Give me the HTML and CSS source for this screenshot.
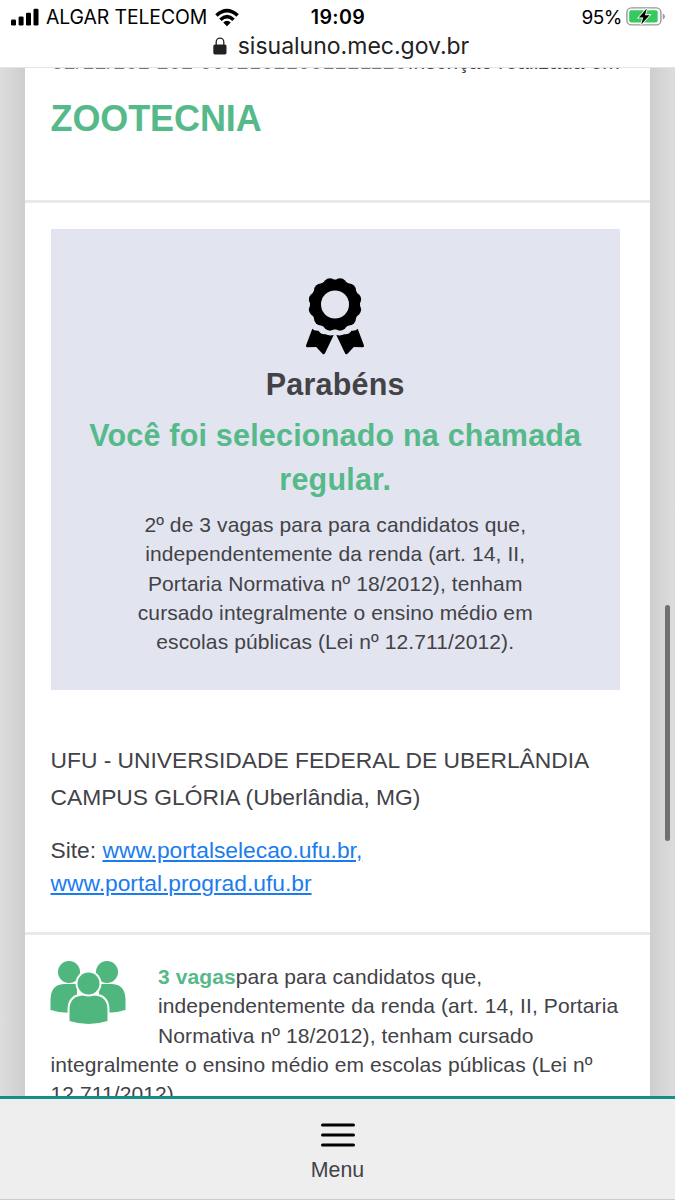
FILE: index.html
```html
<!DOCTYPE html>
<html lang="pt-BR">
<head>
<meta charset="utf-8">
<title>SiSU</title>
<link rel="stylesheet" href="styles.css">
</head>
<body>
<div class="screen">
  <header class="chrome">
    <div class="status">
      <div class="carrier">
        <svg width="30" height="18" viewBox="0 0 30 18"><rect x="1" y="11.5" width="5" height="6" rx="1.3"/><rect x="8.6" y="8.5" width="5" height="9" rx="1.3"/><rect x="16" y="4.8" width="5" height="12.7" rx="1.3"/><rect x="23.5" y="0.8" width="5" height="16.7" rx="1.3"/></svg>
        <span class="carrier-name">ALGAR TELECOM</span>
        <svg class="wifi" width="26" height="19" viewBox="0 0 26 19"><path d="M1.2 6.2Q13-4.800 24.8 6.2L22.3 8.800Q13 .4 3.7 8.800ZM5.2 10.4Q13 3 20.8 10.4L18.3 13Q13 8.2 7.7 13ZM9.2 14.4Q13 11 16.8 14.4L13 18.2Z"/></svg>
      </div>
      <span class="clock">19:09</span>
      <div class="power">
        <span class="percent">95%</span>
        <svg width="40" height="20" viewBox="0 0 40 20"><rect x=".9" y=".9" width="34" height="17" rx="4.5" fill="#fff" stroke="#999" stroke-width="1.4"/><rect x="3.2" y="3.2" width="28.5" height="12.4" rx="2" fill="#35ca5b"/><path d="M36.8 6.5Q39 7.5 39 9.5T36.8 12.5Z" fill="#999"/><path d="M20.8 1.500L12.8 10.600H17.200L15.200 17.500L23.600 8.200H19Z" stroke="#fff" stroke-width="1.8" paint-order="stroke"/></svg>
      </div>
    </div>
    <div class="address">
      <svg width="14" height="18" viewBox="0 0 14 18"><path d="M3.2 8V5a3.8 3.8 0 0 1 7.6 0v3" fill="none" stroke="#222" stroke-width="1.3"/><rect x=".3" y="7.4" width="13.2" height="10" rx="1.6" fill="#222"/></svg>
      <span class="url">sisualuno.mec.gov.br</span>
    </div>
  </header>
  <main class="viewport">
    <article class="card">
      <div class="clipped"><span class="code">02/12/202 202 00021021001221120</span><span class="enrol">Inscrição realizada em</span></div>
      <section class="course"><h1 class="course-name">ZOOTECNIA</h1></section>
      <section class="result">
        <div class="congrats">
          <svg class="award" width="60" height="78" viewBox="0 0 60 78">
            <g transform="translate(30 26.500)">
              <circle r="25.100"/>
              <circle cx="5.120" cy="19.130" r="7"/><circle cx="14" cy="14" r="7"/><circle cx="19.130" cy="5.120" r="7"/>
              <circle cx="19.130" cy="-5.120" r="7"/><circle cx="14" cy="-14" r="7"/><circle cx="5.120" cy="-19.130" r="7"/>
              <circle cx="-5.120" cy="-19.130" r="7"/><circle cx="-14" cy="-14" r="7"/><circle cx="-19.130" cy="-5.120" r="7"/>
              <circle cx="-19.130" cy="5.120" r="7"/><circle cx="-14" cy="14" r="7"/><circle cx="-5.120" cy="19.130" r="7"/>
              <circle r="14" fill="#e2e5ef"/>
            </g>
            <path id="ribbon" d="M7.300 50.700Q9 53.200 13.500 52.800Q16 56.800 20.500 56.300Q24.500 58.200 28.700 57L20 75.300Q19 77.200 17.500 75.700L11.200 68.900L2.200 69.200Q.500 69 1.100 67.200Z"/>
            <use href="#ribbon" transform="translate(60 0) scale(-1 1)"/>
          </svg>
          <h2 class="parabens">Parabéns</h2>
          <p class="selected">Você foi selecionado na chamada<br>regular.</p>
          <p class="quota">2º de 3 vagas para para candidatos que,<br>independentemente da renda (art. 14, II,<br>Portaria Normativa nº 18/2012), tenham<br>cursado integralmente o ensino médio em<br>escolas públicas (Lei nº 12.711/2012).</p>
        </div>
        <div class="school"><p class="uni">UFU - UNIVERSIDADE FEDERAL DE UBERLÂNDIA</p><p class="campus">CAMPUS GLÓRIA (Uberlândia, MG)</p></div>
        <p class="site">Site: <a href="#">www.portalselecao.ufu.br,</a><br><a href="#">www.portal.prograd.ufu.br</a></p>
      </section>
      <section class="places">
        <svg class="people" width="76" height="64" viewBox="0 0 76 64"><g fill="#4fb77e"><circle cx="19" cy="11" r="11"/><circle cx="57" cy="11" r="11"/><path d="M.5 49V38Q1 23 15 23H27V51Q13 53 .5 49ZM75.500 49V38Q75 23 61 23H49V51Q63 53 75.500 49Z"/></g><g fill="#4fb77e" stroke="#fff" stroke-width="4" paint-order="stroke"><path d="M19.500 60V49Q19.500 34.500 34 34.500H43Q57.500 34.500 57.500 49V60Q38.500 66 19.500 60Z"/><circle cx="38.500" cy="22.500" r="11"/></g></svg>
        <p class="quota-list"><b>3 vagas</b>para para candidatos que,<br>independentemente da renda (art. 14, II, Portaria<br>Normativa nº 18/2012), tenham cursado<br>integralmente o ensino médio em escolas públicas (Lei nº<br>12.711/2012).</p>
      </section>
    </article>
  </main>
  <nav class="menu">
    <svg width="34" height="24" viewBox="0 0 34 24"><path d="M1.500 2H32.500M1.500 12H32.500M1.500 22H32.500" stroke="#000" stroke-width="3" stroke-linecap="round"/></svg>
    <span class="menu-label">Menu</span>
  </nav>
  <div class="scrollbar"></div>
</div>
</body>
</html>
```
FILE: styles.css
```css
* { box-sizing: border-box; margin: 0; padding: 0; }
body { font-family: "Liberation Sans", Arial, sans-serif; color: #424247; background: #ddd; }
svg { display: block; flex: none; }
.screen { position: relative; width: 675px; height: 1200px; display: flex; flex-direction: column; overflow: hidden; }
.chrome { height: 68px; flex: none; background: #fff; border-bottom: 1px solid #e4e4e4; color: #000; font-family: Inter, sans-serif; }
.status { height: 34px; display: grid; grid-template-columns: 1fr auto 1fr; align-items: center; padding: 0 9px 0 10px; }
.carrier, .power { display: flex; align-items: center; }
.power { justify-content: flex-end; gap: 4px; }
.carrier-name { font-size: 19.4px; margin-left: 6px; letter-spacing: -.1px; white-space: nowrap; }
.wifi { margin-left: 7px; }
.clock { font-size: 19.6px; font-weight: 600; letter-spacing: .4px; }
.percent { font-size: 19px; letter-spacing: -.5px; }
.address { display: flex; justify-content: center; align-items: center; gap: 11px; height: 24px; padding-left: 7px; color: #222; }
.url { font-size: 23px; }
.viewport { flex: 1; overflow: hidden; padding: 0 24.5px; background: linear-gradient(90deg, #ddd, #cecece 25px, #cecece 650px, #ddd); }
.card { width: 625.5px; height: 1060px; background: #fff; }
.clipped { height: 15px; padding-left: 27px; display: flex; font-size: 21px; line-height: 20px; letter-spacing: .1px; white-space: nowrap; }
.clipped span { margin-top: -16px; height: 20px; }
.code { width: 356px; letter-spacing: .6px; color: #77777b; }
.course { height: 119.5px; border-bottom: 3px solid #e9e9e9; padding: 14px 26px; }
.course-name { font-size: 36px; line-height: 43px; letter-spacing: -.1px; color: #56b98a; }
.result { height: 732px; padding: 26.5px 26px 0; border-bottom: 3px solid #e9e9e9; }
.congrats { width: 569.5px; height: 461px; background: #e2e5ef; padding-top: 49px; display: flex; flex-direction: column; align-items: center; text-align: center; }
.parabens { font-size: 30.5px; line-height: 44px; margin-top: 6px; letter-spacing: .2px; }
.selected { font-size: 30.5px; line-height: 44px; font-weight: 700; color: #56b98a; margin-top: 7px; letter-spacing: .2px; white-space: nowrap; }
.quota { font-size: 21px; line-height: 29.3px; letter-spacing: .1px; margin-top: 9px; white-space: nowrap; }
.school { margin-top: 52px; font-size: 22.8px; line-height: 37.3px; white-space: nowrap; }
.site { margin-top: 17px; font-size: 22.8px; line-height: 33px; }
.site a { color: #1a7cee; text-decoration: underline; }
.places { padding: 26.5px 26px 0; font-size: 21px; line-height: 29.3px; letter-spacing: .1px; white-space: nowrap; }
.people { float: left; margin: 0 32.5px 20px -1px; }
.quota-list { padding-top: 1px; }
.quota-list b { color: #56b98a; }
.menu { height: 104px; flex: none; background: #eee; border-top: 3px solid #158e8b; border-bottom: 1px solid #ccc; display: flex; flex-direction: column; align-items: center; padding-top: 24px; gap: 11px; }
.menu-label { font-size: 21.3px; line-height: 25px; }
.scrollbar { position: absolute; left: 665px; top: 605px; width: 5px; height: 236px; border-radius: 3px; background: #707070; }
```
